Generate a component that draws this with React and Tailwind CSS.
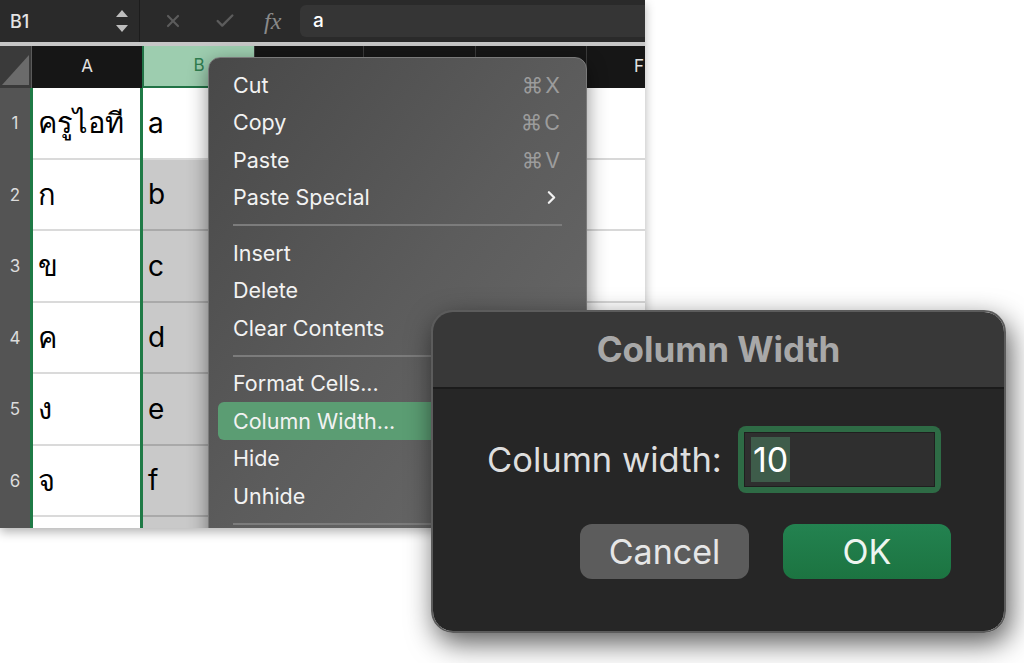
import React from 'react';
import { X, Check, ChevronRight } from 'lucide-react';

const FONT = { fontFamily: 'Inter, "Noto Sans", "DejaVu Sans", sans-serif' };

const ROWS = [
  { n: '1', a: 'ครูไอที', b: 'a' },
  { n: '2', a: 'ก', b: 'b' },
  { n: '3', a: 'ข', b: 'c' },
  { n: '4', a: 'ค', b: 'd' },
  { n: '5', a: 'ง', b: 'e' },
  { n: '6', a: 'จ', b: 'f' },
];

const MENU = [
  [
    { label: 'Cut', key: 'X' },
    { label: 'Copy', key: 'C' },
    { label: 'Paste', key: 'V' },
    { label: 'Paste Special', sub: true },
  ],
  [{ label: 'Insert' }, { label: 'Delete' }, { label: 'Clear Contents' }],
  [{ label: 'Format Cells...' }, { label: 'Column Width...', active: true }, { label: 'Hide' }, { label: 'Unhide' }],
];

function FormulaBar() {
  return (
    <div className="h-[42px] flex items-center bg-[#2a2a2a]">
      <div className="w-[140px] h-full flex items-center justify-between pl-[10px] pr-[10px] border-r border-[#1c1c1c]">
        <span className="text-[18px] font-medium text-[#e4e4e4]">B1</span>
        <svg width="14" height="26" viewBox="0 0 14 26">
          <polygon points="7,2 13,9 1,9" fill="#bdbdbd" />
          <polygon points="1,17 13,17 7,24" fill="#bdbdbd" />
        </svg>
      </div>
      <div className="w-[160px] h-full flex items-center">
        <div className="w-[66px] flex justify-center">
          <X size={20} strokeWidth={2.6} color="#5c5c5c" />
        </div>
        <div className="w-[38px] flex justify-center">
          <Check size={22} strokeWidth={2.6} color="#5c5c5c" />
        </div>
        <span className="ml-[20px] text-[24px] italic text-[#8a8a8a]" style={{ fontFamily: '"Liberation Serif", serif' }}>
          fx
        </span>
      </div>
      <div className="flex-1 h-[32px] mr-[-8px] rounded-md bg-[#353535] flex items-center pl-[13px]">
        <span className="text-[19px] font-medium text-white">a</span>
      </div>
    </div>
  );
}

function HeaderRow() {
  return (
    <div className="h-[42px] flex bg-[#161616] text-[17px] text-[#e2e2e2]">
      <div className="w-[32px] h-full bg-[#3a3a3a] border-r border-[#5a5a5a]">
        <svg width="31" height="42" viewBox="0 0 31 42">
          <polygon points="29,9 29,39 2,39" fill="#6b6b6b" />
        </svg>
      </div>
      <div className="w-[110px] flex items-center justify-center">A</div>
      <div className="w-[112px] flex items-center justify-center bg-[#9dcdaf] text-[#2f7d4f] border-l-2 border-b-2 border-[#217346]">
        B
      </div>
      <div className="w-[109px] border-l border-[#3a3a3a]" />
      <div className="w-[112px] border-l border-[#3a3a3a]" />
      <div className="w-[111px] border-l border-[#3a3a3a]" />
      <div className="flex-1 flex items-center justify-end pr-[1px] border-l border-[#3a3a3a]">F</div>
    </div>
  );
}

function Body() {
  return (
    <div className="flex-1 flex overflow-hidden">
      <div className="w-[30px] bg-[#545454] flex flex-col">
        {ROWS.map((r) => (
          <div key={r.n} className="h-[71.5px] shrink-0 flex items-center justify-center text-[17px] text-[#dcdcdc]">
            {r.n}
          </div>
        ))}
      </div>
      <div className="w-[3px] bg-[#1f7a46]" />
      <div className="w-[107px] flex flex-col bg-white">
        {ROWS.map((r) => (
          <div key={r.n} className="h-[71.5px] shrink-0 flex items-center pl-[5px] border-b-2 border-[#dadada] text-[29px] text-black">
            {r.a}
          </div>
        ))}
      </div>
      <div className="w-[3px] bg-[#1f7a46]" />
      <div className="w-[111px] flex flex-col bg-[#c9c9c9]">
        {ROWS.map((r, i) => (
          <div
            key={r.n}
            className={`h-[71.5px] shrink-0 flex items-center pl-[5px] border-b-2 text-[28px] text-black ${
              i === 0 ? 'bg-white border-[#dadada]' : 'border-[#a9a9a9]'
            }`}
          >
            {r.b}
          </div>
        ))}
      </div>
      <div className="flex-1 flex flex-col bg-white">
        {ROWS.map((r) => (
          <div key={r.n} className="h-[71.5px] shrink-0 border-b-2 border-[#d8d8d8]" />
        ))}
      </div>
    </div>
  );
}

function ContextMenu() {
  return (
    <div className="absolute left-[208px] top-[57px] w-[379px] h-[500px] rounded-[12px] border border-[#7a7a7a] bg-gradient-to-br from-[#484848] via-[#5c5c5c] to-[#6c6c6c] shadow-[0_6px_20px_rgba(0,0,0,0.45)] pt-[8px] px-[9px] text-[21.5px] text-[#f2f2f2]">
      {MENU.map((group, gi) => (
        <div key={gi}>
          {gi > 0 && (
            <div className="h-[18px] flex items-center px-[15px]">
              <div className="w-full h-[2px] bg-[#7c7c7c]" />
            </div>
          )}
          {group.map((it) => (
            <div
              key={it.label}
              className={`h-[37.5px] flex items-center justify-between px-[15px] rounded-[6px] ${
                it.active ? 'bg-[#5b9d73]' : ''
              }`}
            >
              <span>{it.label}</span>
              {it.key && <span className="text-[#9c9c9c] tracking-[2px]">⌘{it.key}</span>}
              {it.sub && <ChevronRight size={21} strokeWidth={2.6} color="#f2f2f2" />}
            </div>
          ))}
        </div>
      ))}
      <div className="h-[18px] flex items-center px-[15px]">
        <div className="w-full h-[2px] bg-[#7c7c7c]" />
      </div>
    </div>
  );
}

function Dialog() {
  return (
    <div className="absolute left-[431px] top-[310px] w-[575px] h-[323px] rounded-[22px] border-2 border-[#5c5c5c] overflow-hidden flex flex-col shadow-[4px_10px_28px_rgba(0,0,0,0.65)]">
      <div className="h-[77px] shrink-0 bg-[#383838] flex items-center justify-center border-b-2 border-[#1b1b1b]">
        <span className="text-[35px] font-bold text-[#a8a8a8]">Column Width</span>
      </div>
      <div className="flex-1 bg-[#262626] flex flex-col pt-[37px] pl-[54px] pr-[53px]">
        <div className="flex items-center">
          <span className="text-[34.5px] text-[#dedede] w-[251px]">Column width:</span>
          <div className="w-[203px] h-[67px] rounded-[8px] bg-[#2e6b45] p-[6px]">
            <div className="w-full h-full bg-[#2f2f2f] border border-[#1f1f1f] flex items-center pl-[6px]">
              <span className="h-[45px] flex items-center bg-[#3e5c4a] px-[2px] text-[34px] text-white">10</span>
            </div>
          </div>
        </div>
        <div className="mt-[31px] flex justify-end gap-[34px]">
          <div className="w-[169px] h-[55px] rounded-[12px] bg-[#5c5c5c] flex items-center justify-center text-[34px] text-[#e6e6e6]">
            Cancel
          </div>
          <div className="w-[168px] h-[55px] rounded-[12px] bg-gradient-to-b from-[#238250] to-[#1c7441] flex items-center justify-center text-[34px] text-[#eef5f0]">
            OK
          </div>
        </div>
      </div>
    </div>
  );
}

export default function App() {
  return (
    <div className="relative w-[1024px] h-[663px] bg-white overflow-hidden" style={FONT}>
      <div className="relative w-[645px] h-[528px] flex flex-col overflow-hidden shadow-[0_4px_10px_rgba(0,0,0,0.3)]">
        <FormulaBar />
        <div className="h-[4px] bg-[#c6c6c6]" />
        <HeaderRow />
        <Body />
        <ContextMenu />
      </div>
      <Dialog />
    </div>
  );
}
